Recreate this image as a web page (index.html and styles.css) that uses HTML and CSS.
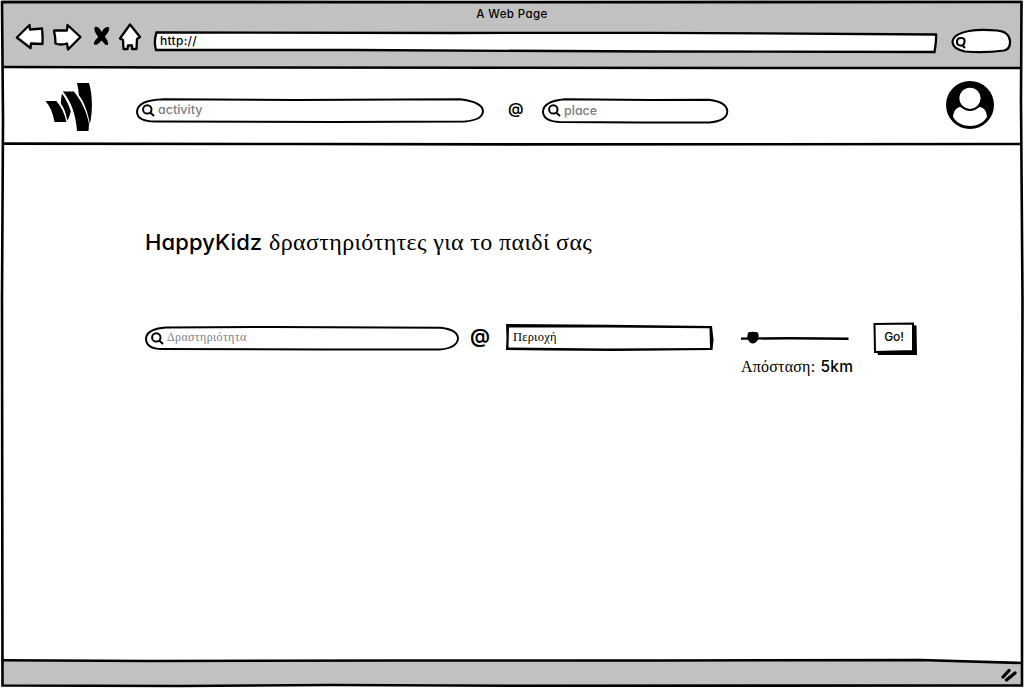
FILE: index.html
```html
<!DOCTYPE html>
<html lang="el">
<head>
<meta charset="utf-8">
<title>A Web Page</title>
<link rel="stylesheet" href="styles.css">
</head>
<body>
<div class="window">
  <header class="chrome">
    <div class="title"><span>A Web Page</span></div>
    <div class="nav">
      <svg class="nav-icons" width="130" height="36" viewBox="14 20 130 36">
        <g fill="#fff" stroke="#000" stroke-width="2.300" stroke-linejoin="round">
          <path d="M16.800 37.500 L29.500 25 L30 29.500 L42 28.500 Q43 36 42.500 44 L31 43.500 L30.500 48 Z"/>
          <path d="M54 30.500 L67 30.500 L67.500 25 L80.500 37 L68 49.500 L67 43.500 Q61 45.500 55.500 43.500 Q55.500 37 54 30.500Z"/>
          <path d="M130 24.500 L140 37 L137 39 L136.500 49 L132 49 L132 45.500 L128 45.500 L127.500 49 L123.500 49 L123 40 L120 38.500 Z"/>
        </g>
        <path d="M95 27 C98 25.500 100 29 101.800 32 C103.500 28.500 106 26 109 27.500 C110 30.500 107 34 104.800 36.500 C107 39.500 109 43 107.800 44.800 C105 46 103 41.500 101.500 40.500 C99.500 42.500 97 46 94.200 44.500 C93 42 96.500 39 98.200 37 C96 34 93 29 95 27Z"/>
      </svg>
      <div class="address">
        <svg class="shape" viewBox="0 0 785 24" width="785" height="24"><path d="M3.500 2.500 L300 3 L500 2.800 L783 4.500 Q783.500 10 781.500 22 L500 21.500 L200 20 L3 20 Q.5 11 3.500 2.500Z" fill="#fff" stroke="#000" stroke-width="2.300"/></svg>
        <span>http://</span>
      </div>
      <svg class="quick" width="62" height="27" viewBox="950 28 62 27">
        <path d="M969 31 Q980 29 997 30.500 Q1009 31.500 1010 41 Q1010.500 49 1004 50.500 Q985 53 965 51.500 Q953 49 952.500 42 Q953 34 969 31Z" fill="#fff" stroke="#000" stroke-width="2.200"/>
        <path d="M961.500 38 Q957.500 37.500 957 41 Q956.500 45 960 45.500 Q964.500 46 964.500 41.500 Q965 38 961.500 38ZM962 45 L965 48" fill="none" stroke="#000" stroke-width="2.100"/>
      </svg>
    </div>
  </header>

  <section class="appbar">
    <svg class="logo" width="50" height="52" viewBox="44 81 50 52">
      <path d="M45.500 101 H56.300 C61 106 64.500 113 66.500 122 H54.500 C53 113 50 106 45.500 101Z"/>
      <path d="M62 93.500 C66 99 69 105 70.800 111.500 Q69.500 117 67.300 120.500 C65.800 112 63.500 107 60.800 103.500 Q61 98 62 93.500Z"/>
      <path d="M62.800 91.500 H73.800 C81 100 87 112 89 124 L88.500 131 H77 C76 115 71 101 62.800 91.500Z"/>
      <path d="M77 83 H89 C92.500 94 93 112 89.800 124 C88 112 84 102 78.800 95 Q78.500 89 77 83Z"/>
    </svg>
    <label class="pill pill-activity">
      <svg class="shape" width="350" height="27" viewBox="0 0 350 27"><path d="M29 2.200 L160 3 L325 2.200 Q348 5 348 14.500 Q347 23 330 24.500 L200 25 L22 24.500 Q2.500 25 2 15 Q2 3 29 2.200Z" fill="#fff" stroke="#000" stroke-width="2"/></svg>
      <svg class="lens" width="13" height="13" viewBox="0 0 13 13"><circle cx="5.300" cy="5.400" r="4.200"/><path d="M8.200 8.500 L12 12"/></svg>
      <span>activity</span>
    </label>
    <span class="at at-small">@</span>
    <label class="pill pill-place">
      <svg class="shape" width="188" height="27" viewBox="0 0 188 27"><path d="M24 2.200 L110 3 L168 2.800 Q186 5 186.300 14.500 Q186 24 168 25.500 L100 25.500 L18 25 Q2.500 24 2 15 Q2 4 24 2.200Z" fill="#fff" stroke="#000" stroke-width="2"/></svg>
      <svg class="lens" width="13" height="13" viewBox="0 0 13 13"><circle cx="5.300" cy="5.400" r="4.200"/><path d="M8.200 8.500 L12 12"/></svg>
      <span>place</span>
    </label>
    <svg class="avatar" width="48" height="48" viewBox="0 0 48 48">
      <circle cx="24" cy="24" r="24"/>
      <path d="M7 36 C7.500 30 10 26.500 14.500 26 C20 30 28 30 33.500 26 C38 26.500 40.500 30 41 36 C34 48 14 48 7 36Z" fill="#fff"/>
      <circle cx="24" cy="17.300" r="11.600" stroke="#000" stroke-width="2" fill="#fff"/>
    </svg>
  </section>

  <main class="content">
    <h1><span class="brand">HappyKidz</span><span class="tagline">δραστηριότητες για το παιδί σας</span></h1>
    <div class="search">
      <label class="pill pill-main">
        <svg class="shape" width="316" height="27" viewBox="0 0 316 27"><path d="M22 2.500 L130 2 L297 2.800 Q314 5 314 13.500 Q313 23 296 24.500 L180 24.500 L18 24 Q2.500 24 2 14 Q2 4 22 2.500Z" fill="#fff" stroke="#000" stroke-width="2"/></svg>
        <svg class="lens" width="13" height="13" viewBox="0 0 13 13"><circle cx="5.300" cy="5.400" r="4.200"/><path d="M8.200 8.500 L12 12"/></svg>
        <span>Δραστηριότητα</span>
      </label>
      <span class="at at-large">@</span>
      <div class="region">
        <svg class="shape" width="208" height="27" viewBox="0 0 208 27"><path d="M0 0 L100 .8 L206 2 L207.500 16 L206.500 26 L110 27 L40 26.500 L0 26 L.5 14Z M3 3.500 L2.500 23.500 L100 24.500 L204 24 L203.500 4.200 L100 3.500Z" fill-rule="evenodd"/></svg>
        <span>Περιοχή</span>
      </div>
      <div class="distance">
        <svg width="110" height="16" viewBox="740 330 110 16"><path d="M741 338.600 L790 338.200 L848.500 338.800" stroke="#000" stroke-width="2.400" fill="none"/><path d="M748 332.500 Q753 331 758 332.500 Q759.500 336 758 340 L755 343 Q752.500 344 750 342.500 L747 338.500Z"/></svg>
        <div class="caption">Απόσταση: <b>5km</b></div>
      </div>
      <button class="go">
        <svg class="shape" width="44" height="34" viewBox="0 0 44 34"><path d="M39 3 L43.500 3.500 L44 33 L5 33 L4 29Z"/><path d="M1.500 2 L40 1.500 L40 29 L2 30Z" fill="#fff" stroke="#000" stroke-width="2"/></svg>
        <span>Go!</span>
      </button>
    </div>
  </main>

  <footer class="status">
    <svg width="18" height="14" viewBox="1001 668 18 14"><path d="M1004 677 L1010 670.500 M1007.500 680 L1016 673" stroke="#000" stroke-width="3.300" stroke-linecap="round"/></svg>
  </footer>

  <svg class="frame" width="1024" height="688" viewBox="0 0 1024 688">
    <path d="M2 657 L2 660.300 L500 660 L920 659.500 L1022 663 L1022 657Z" fill="#fff"/>
    <g fill="none" stroke="#000" stroke-width="2.600">
      <path d="M2 2 L512 2.300 L1021.500 2 L1021 100 L1022.500 300 L1022 500 L1022 685.500 L512 685.800 L330 685 L180 686 L2.500 685.500 L2 300 L3 120 Z"/>
      <path d="M2 67 L180 67.500 L512 67.800 L780 68 L1021 68"/>
      <path d="M2 143.600 L300 144 L512 144.400 L1021 144"/>
      <path d="M2 660.300 L150 661 L400 660.500 L660 660.500 L920 660 L1022 663"/>
    </g>
  </svg>
</div>
</body>
</html>
```
FILE: styles.css
```css
* { box-sizing: border-box; }
body {
  margin: 0;
  background: #fff;
  color: #000;
  font-family: "Inter", "Lato", sans-serif;
  font-feature-settings: "cv11", "ss03";
}
.window {
  position: relative;
  display: grid;
  grid-template-rows: 68px 76px 1fr 27px;
  width: 1024px;
  height: 688px;
  overflow: hidden;
  padding: 0 2px 2px;
}
.frame { position: absolute; inset: 0; pointer-events: none; }
.shape { position: absolute; left: 0; top: 0; z-index: -1; }

.chrome { background: #c1c1c1; }
.title {
  height: 20px;
  padding-top: 7px;
  text-align: center;
  font-size: 11.5px;
  line-height: 15px;
  font-weight: 500;
  letter-spacing: .4px;
}
.nav { display: flex; align-items: flex-start; padding-left: 12px; }
.nav-icons { flex: none; }
.address {
  position: relative;
  z-index: 0;
  width: 785px;
  height: 24px;
  margin: 10px 0 0 9px;
  padding: 2px 0 0 7px;
  font-size: 12px;
  line-height: 17px;
  font-weight: 500;
  letter-spacing: .3px;
}
.quick { flex: none; margin: 8px 0 0 12px; }

.appbar { display: flex; align-items: flex-start; padding: 13px 28px 0 42px; }
.pill {
  position: relative;
  z-index: 0;
  display: flex;
  align-items: flex-start;
  gap: 4px;
  height: 27px;
  padding: 7px 0 0 7px;
  color: #7e7b83;
}
.pill span { font-size: 12.5px; line-height: 16px; margin: -2px 0 0 -1px; font-weight: 500; }
.lens { flex: none; fill: none; stroke: #000; stroke-width: 2; }
.pill-activity { width: 350px; margin: 16px 0 0 41px; }
.pill-place { width: 188px; margin: 16px 0 0 16px; }
.pill-place .lens + span { margin-top: -1px; }
.at { font-weight: 600; }
.at-small { width: 17px; margin: 18px 0 0 23px; font-size: 15.5px; line-height: 19px; }
.avatar { margin-left: auto; }

.content { padding: 83px 0 0 143px; }
h1 { display: flex; align-items: baseline; margin: 0; height: 30px; font-weight: 400; line-height: 30px; }
.brand { width: 124px; font-size: 22px; font-weight: 450; letter-spacing: .1px; white-space: nowrap; }
.tagline { font: 24px/30px "Liberation Serif", serif; letter-spacing: .36px; white-space: nowrap; }
.search { display: flex; align-items: flex-start; margin-top: 65px; }
.pill-main { width: 316px; margin: 3px 0 0 -1px; }
.pill-main span { font: 12px/15px "Liberation Serif", serif; letter-spacing: .35px; margin: -2px 0 0 -1px; }
.at-large { width: 24px; margin: 2px 0 0 10px; font-size: 20px; line-height: 24px; }
.region {
  position: relative;
  z-index: 0;
  width: 208px;
  height: 27px;
  margin: 2px 0 0 12px;
  padding: 5px 0 0 7px;
  font: 12.5px/16px "Liberation Serif", serif;
  letter-spacing: .2px;
}
.distance { width: 133px; margin: 8px 0 0 26px; }
.distance svg { display: block; }
.caption { margin-top: 11px; padding-left: 1px; font: 16px/20px "Liberation Serif", serif; letter-spacing: .2px; white-space: nowrap; }
.caption b { margin-left: 1px; font: 500 15.5px/20px "Inter", sans-serif; }
.go {
  position: relative;
  z-index: 0;
  width: 44px;
  height: 34px;
  padding: 0 3px 4px 1px;
  border: 0;
  background: none;
  color: #000;
  font: 500 12px/16px "Inter", sans-serif;
  letter-spacing: -.1px;
}

.status { display: flex; justify-content: flex-end; align-items: flex-start; padding: 9px 4px 0 0; background: #c1c1c1; }
```
